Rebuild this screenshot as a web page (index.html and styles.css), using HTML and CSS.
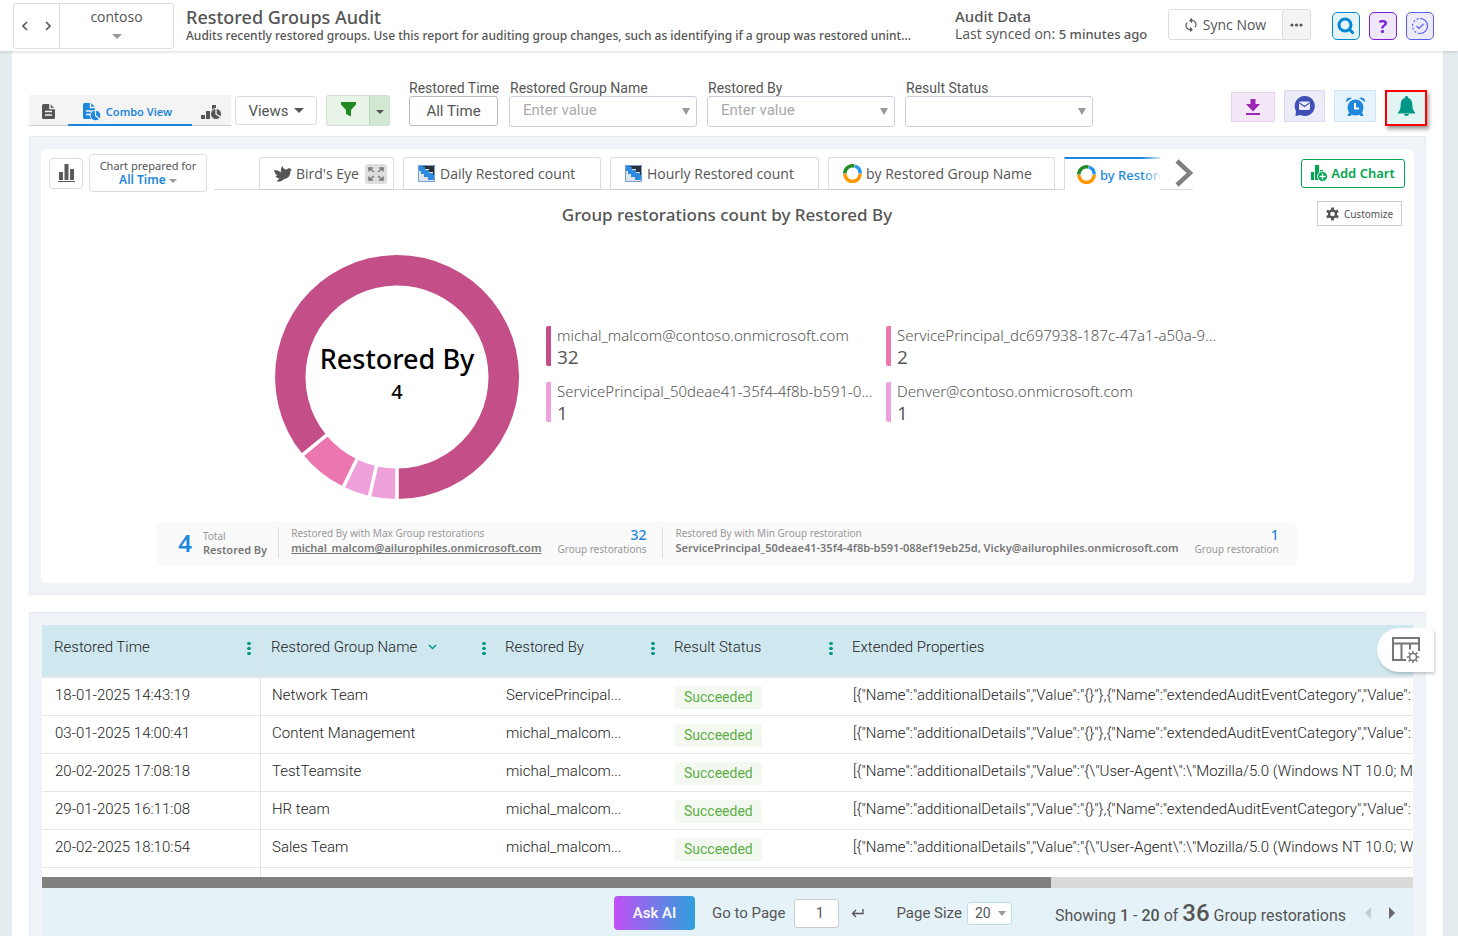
FILE: index.html
```html
<!DOCTYPE html>
<html lang="en">
<head>
  <meta charset="UTF-8">
  <meta name="viewport" content="width=device-width, initial-scale=1.0">
  <title>Restored Groups Audit</title>
  <link rel="stylesheet" href="styles.css">
</head>
<body>

  <header class="topbar">
    <div class="tenant">
      <div class="tenant-nav">
        <button aria-label="Back"><svg width="6" height="10" viewBox="0 0 6 10"><path d="M5 1L1 5l4 4" fill="none" stroke="#555" stroke-width="1.6"/></svg></button>
        <button aria-label="Forward"><svg width="6" height="10" viewBox="0 0 6 10"><path d="M1 1l4 4-4 4" fill="none" stroke="#555" stroke-width="1.6"/></svg></button>
      </div>
      <button class="tenant-name">contoso<span class="caret grey"></span></button>
    </div>
    <div class="page-title">
      <h1>Restored Groups Audit</h1>
      <p>Audits recently restored groups. Use this report for auditing group changes, such as identifying if a group was restored unint...</p>
    </div>
    <div class="sync-info">
      <div class="sync-title">Audit Data</div>
      <div>Last synced on: <b>5 minutes ago</b></div>
    </div>
    <div class="sync">
      <button class="sync-now">
        <svg width="12" height="14" viewBox="0 0 12 14" fill="none" stroke="#555" stroke-width="1.2"><path d="M5 2.5H6.500a4 4 0 0 1 3.300 6.800M7 11.500H5.500A4 4 0 0 1 2.200 4.700"/><path d="M7 .5L5 2.500l2 2M5 9.500l2 2-2 2"/></svg>
        Sync Now
      </button>
      <button class="sync-more" aria-label="More">
        <svg width="13" height="4" viewBox="0 0 13 4" fill="#555"><circle cx="2" cy="2" r="1.6"/><circle cx="6.500" cy="2" r="1.6"/><circle cx="11" cy="2" r="1.6"/></svg>
      </button>
    </div>
    <div class="top-icons">
      <button class="ic-search" aria-label="Search"><svg width="18" height="18" viewBox="0 0 18 18" fill="none" stroke="#0288d1" stroke-width="3"><circle cx="8" cy="8" r="6"/><path d="M12 12l4.500 4.500"/></svg></button>
      <button class="ic-help" aria-label="Help">?</button>
      <button class="ic-check" aria-label="Tasks"><svg width="18" height="18" viewBox="0 0 18 18" fill="none" stroke="#5b5fef" stroke-width="1.2"><path d="M9 1.500a7.500 7.500 0 0 1 0 15"/><path d="M9 16.500a7.500 7.500 0 0 1 0-15" stroke-dasharray="2 2"/><path d="M5.500 9l2.500 2.500 4.500-4.500"/></svg></button>
    </div>
  </header>

  <main class="content">

    <div class="toolbar">
      <div class="view-tabs">
        <button aria-label="Report view"><svg width="13" height="15" viewBox="0 0 13 15"><path d="M2 0h6l5 4.500V13.500a1.500 1.500 0 0 1-1.500 1.500h-10A1.500 1.500 0 0 1 0 13.500v-12A1.500 1.500 0 0 1 1.500 0z" fill="#555"/><path d="M8 0v4.500h5M3 7.500h7M3 11h7" fill="none" stroke="#f4f4f4" stroke-width="1.500"/></svg></button>
        <button class="active">
          <svg width="18" height="18" viewBox="0 0 18 18"><path d="M1.500 0H8l4 4v12H1.500A1.500 1.500 0 0 1 0 14.500v-13A1.500 1.500 0 0 1 1.500 0z" fill="#1f87db"/><path d="M7.500 0v4.500H12M3 8h6M3 11.500h4" fill="none" stroke="#f4f4f4" stroke-width="1.400"/><circle cx="12.500" cy="12.500" r="5.300" fill="#1f87db" stroke="#f4f4f4"/><path d="M12.500 7v5.500l4 3.500" fill="none" stroke="#f4f4f4" stroke-width="1.200"/></svg>
          Combo View
        </button>
        <button aria-label="Chart view"><svg width="21" height="16" viewBox="0 0 21 16" fill="#555"><path d="M0 11h4v4H0zM5 7h4v8H5zM11 1h4v5h-4z"/><circle cx="15" cy="10" r="5.500" stroke="#f4f4f4"/><path d="M15 4v6l4.500 3" fill="none" stroke="#f4f4f4" stroke-width="1.300"/></svg></button>
      </div>
      <button class="views">Views <span class="caret"></span></button>
      <div class="filter-btn">
        <button aria-label="Filter"><svg width="15" height="15" viewBox="0 0 15 15"><path d="M0 0h15v2.500L10 8v6.500L5 12V8L0 2.500z" fill="#1f8a1f"/></svg></button>
        <button class="filter-more" aria-label="Filter options"><span class="caret"></span></button>
      </div>
      <div class="filters">
        <div class="field time">
          <label for="restoredTime">Restored Time</label>
          <button id="restoredTime">All Time</button>
        </div>
        <div class="field">
          <label for="groupName">Restored Group Name</label>
          <div class="select-box"><select id="groupName"><option>Enter value</option></select></div>
        </div>
        <div class="field">
          <label for="restoredBy">Restored By</label>
          <div class="select-box"><select id="restoredBy"><option>Enter value</option></select></div>
        </div>
        <div class="field">
          <label for="resultStatus">Result Status</label>
          <div class="select-box"><select id="resultStatus"><option></option></select></div>
        </div>
      </div>
      <div class="actions">
        <button class="act-download" aria-label="Download"><svg width="14" height="16" viewBox="0 0 14 16" fill="#9c27b0"><path d="M4.500 0h5v5H14l-7 7.500L0 5h4.500zM0 14h14v2H0z"/></svg></button>
        <button class="act-mail" aria-label="Mail"><svg width="21" height="20" viewBox="0 0 21 20"><path d="M10.500 0a10 10 0 1 1-4 19L1.500 20l.5-5A10 10 0 0 1 10.500 0z" fill="#3f51b5"/><rect x="5" y="5.500" width="11" height="8.500" rx="1.500" fill="#ebecf8"/><path d="M5.500 7l5 3.500 5-3.500" fill="none" stroke="#3f51b5" stroke-width="1.200"/></svg></button>
        <button class="act-clock" aria-label="Schedule"><svg width="19" height="19" viewBox="0 0 19 19"><g fill="#1f87db"><circle cx="9.500" cy="10.500" r="8"/><path d="M0 5a4 4 0 0 1 6-4zM19 5a4 4 0 0 0-6-4zM3 15l3 2.500L4.500 19H1.500zM16 15l-3 2.500 1.500 1.500h3z"/></g><path d="M9 6v5.500h4" fill="none" stroke="#fff" stroke-width="2"/></svg></button>
        <button class="act-bell" aria-label="Alert"><svg width="17" height="20" viewBox="0 0 17 20" fill="#009688"><path d="M8.500 0c1 0 1.500.7 1.500 1.700 3 .9 4.300 3.500 4.300 6.300 0 4 .7 6.500 2.700 8.500v1H0v-1C2 14.500 2.700 12 2.700 8 2.700 5.200 4 2.600 7 1.700 7 .7 7.500 0 8.500 0zM6 18h5a2.500 2 0 0 1-5 0z"/></svg></button>
      </div>
    </div>

    <section class="panel chart-panel">
      <div class="card">
        <div class="chart-head">
          <button class="chart-type" aria-label="Chart type"><svg width="17" height="18" viewBox="0 0 17 18" fill="#5a5a5a"><path d="M1 8h4v8H1zM6.500 0h4v16h-4zM12 5h4v11h-4zM0 17h17v1H0z"/></svg></button>
          <button class="prepared">Chart prepared for<span class="prepared-val">All Time <span class="caret grey"></span></span></button>
          <div class="tab-strip">
            <div class="tabs">
              <div class="tab birds-eye">
                <svg width="18" height="16" viewBox="0 0 18 16" fill="#555"><path d="M0 4c3 0 5 .8 7 2.500C6.500 4 7 1.500 8.500 0c.5 2 2 3.500 4 3.500L14 2.500c1.500-.7 2.500 0 3 .7l1 .8-1.500.8c0 5.200-2.500 7.700-6.500 8.400C7.500 15.500 5 16 2.500 15.200l3-2.700C3.500 12.300 2 11.500 1.500 10l2-.3C1.500 8.500.5 6.500 0 4z"/></svg>
                Bird's Eye
                <button class="expand" aria-label="Expand"><svg width="16" height="14" viewBox="0 0 16 14" fill="none" stroke="#777" stroke-width="1.500"><path d="M1 4.500V1h4M1 1l5 4M11 1h4v3.500M15 1l-5 4M1 9.500V13h4M1 13l5-4M11 13h4V9.500M15 13l-5-4"/></svg></button>
              </div>
              <button class="tab daily"><svg width="17" height="17" viewBox="0 0 17 17"><path d="M0 0h17v17H0z" fill="#dce3ea"/><path d="M0 0h5v2h2v3h4v3h4v2h2v5h-7v-3H6V9H3V6H0z" fill="#2b8be0"/><path d="M5 0h12v10h-2V7h-4V4H7V2H5z" fill="#2b2f36"/><path d="M.5.5h16v16H.5z" fill="none" stroke="#7b9fcf"/></svg>Daily Restored count</button>
              <button class="tab hourly"><svg width="17" height="17" viewBox="0 0 17 17"><path d="M0 0h17v17H0z" fill="#dce3ea"/><path d="M0 0h5v2h2v3h4v3h4v2h2v5h-7v-3H6V9H3V6H0z" fill="#2b8be0"/><path d="M5 0h12v10h-2V7h-4V4H7V2H5z" fill="#2b2f36"/><path d="M.5.5h16v16H.5z" fill="none" stroke="#7b9fcf"/></svg>Hourly Restored count</button>
              <button class="tab by-name"><svg width="19" height="19" viewBox="0 0 19 19" fill="none" stroke-width="3.500"><path d="M1.800 9.500A7.700 7.700 0 0 1 11.500 2.100" stroke="#228b22"/><path d="M12 2.200a7.700 7.700 0 0 1 5.200 7.300" stroke="#2196f3"/><path d="M17.200 9.800a7.700 7.700 0 0 1-15.400 0" stroke="#ff9800"/></svg>by Restored Group Name</button>
              <button class="tab current"><svg width="19" height="19" viewBox="0 0 19 19" fill="none" stroke-width="3.500"><path d="M1.800 9.500A7.700 7.700 0 0 1 11.500 2.100" stroke="#228b22"/><path d="M12 2.200a7.700 7.700 0 0 1 5.200 7.300" stroke="#2196f3"/><path d="M17.200 9.800a7.700 7.700 0 0 1-15.400 0" stroke="#ff9800"/></svg>by Restored By</button>
            </div>
            <button class="next" aria-label="Next charts"><svg width="18" height="28" viewBox="0 0 18 28"><path d="M2 2l13 12L2 26" fill="none" stroke="#808080" stroke-width="4.500"/></svg></button>
          </div>
          <button class="add-chart">
            <svg width="17" height="18" viewBox="0 0 17 18" fill="#00a651"><path d="M0 8h3v8H0zM4 1h4v15H4zM9 6h3v8H9z"/><circle cx="11.500" cy="12.500" r="5" stroke="#fff"/><path d="M11.500 9.500v6M8.500 12.500h6" stroke="#fff" stroke-width="1.300"/></svg>
            Add Chart
          </button>
        </div>

        <div class="chart-title">
          <h2>Group restorations count by Restored By</h2>
          <button class="customize">
            <svg width="13" height="14" viewBox="-7 -7 14 14"><g fill="#555"><path d="M-1.500-7h3v14h-3z"/><path d="M-1.500-7h3v14h-3z" transform="rotate(60)"/><path d="M-1.500-7h3v14h-3z" transform="rotate(120)"/><circle r="5"/></g><circle r="2.500" fill="#fff"/></svg>
            Customize
          </button>
        </div>

        <div class="chart-body">
          <svg class="donut" width="246" height="246" viewBox="-123 -123 246 246">
            <path fill="#c44f88" d="M0 122A122 122 0 1 0-94.100 77.600L-70.600 58.200A91.500 91.500 0 1 1 0 91.500z"/>
            <path fill="#ec77b0" d="M-94.100 77.600A122 122 0 0 0-53.500 109.700L-40.100 82.200A91.500 91.500 0 0 1-70.600 58.200z"/>
            <path fill="#eda0da" d="M-53.500 109.700A122 122 0 0 0-27.400 118.900L-20.600 89.200A91.500 91.500 0 0 1-40.100 82.200z"/>
            <path fill="#eda0da" d="M-27.400 118.900A122 122 0 0 0 0 122V91.500A91.500 91.500 0 0 1-20.600 89.200z"/>
            <path stroke="#fff" stroke-width="3.500" d="M0 90v34M-20.300 88L-27.900 121M-39.500 81L-54.400 111.500M-69.500 57.300L-96 79.200" fill="none"/>
            <text class="donut-name" y="-8">Restored By</text>
            <text class="donut-num" y="22">4</text>
          </svg>
          <ul class="legend">
            <li class="c1"><span>michal_malcom@contoso.onmicrosoft.com</span><strong>32</strong></li>
            <li class="c2"><span>ServicePrincipal_dc697938-187c-47a1-a50a-9...</span><strong>2</strong></li>
            <li class="c3"><span>ServicePrincipal_50deae41-35f4-4f8b-b591-0...</span><strong>1</strong></li>
            <li class="c3"><span>Denver@contoso.onmicrosoft.com</span><strong>1</strong></li>
          </ul>
        </div>

        <div class="stats">
          <div class="stat total">
            <span class="big">4</span>
            <div>Total<b>Restored By</b></div>
          </div>
          <div class="stat">
            <div>Restored By with Max Group restorations<a href="#">michal_malcom@ailurophiles.onmicrosoft.com</a></div>
            <div class="count"><span>32</span>Group restorations</div>
          </div>
          <div class="stat">
            <div>Restored By with Min Group restoration<b>ServicePrincipal_50deae41-35f4-4f8b-b591-088ef19eb25d, Vicky@ailurophiles.onmicrosoft.com</b></div>
            <div class="count"><span>1</span>Group restoration</div>
          </div>
        </div>
      </div>
    </section>

    <section class="panel grid-panel">
      <div class="grid-scroll">
        <table>
          <thead>
            <tr>
              <th class="w-time">Restored Time<i class="dots"></i></th>
              <th class="w-group">Restored Group Name <svg class="sort" width="9" height="6" viewBox="0 0 9 6"><path d="M1 1l3.500 3.500L8 1" fill="none" stroke="#009688" stroke-width="1.500"/></svg><i class="dots"></i></th>
              <th class="w-by">Restored By<i class="dots"></i></th>
              <th class="w-status">Result Status<i class="dots"></i></th>
              <th>Extended Properties</th>
            </tr>
          </thead>
          <tbody>
            <tr>
              <td>18-01-2025 14:43:19</td><td>Network Team</td><td>ServicePrincipal...</td><td class="status"><span class="badge">Succeeded</span></td>
              <td>[{"Name":"additionalDetails","Value":"{}"},{"Name":"extendedAuditEventCategory","Value":</td>
            </tr>
            <tr>
              <td>03-01-2025 14:00:41</td><td>Content Management</td><td>michal_malcom...</td><td class="status"><span class="badge">Succeeded</span></td>
              <td>[{"Name":"additionalDetails","Value":"{}"},{"Name":"extendedAuditEventCategory","Value":</td>
            </tr>
            <tr>
              <td>20-02-2025 17:08:18</td><td>TestTeamsite</td><td>michal_malcom...</td><td class="status"><span class="badge">Succeeded</span></td>
              <td>[{"Name":"additionalDetails","Value":"{\"User-Agent\":\"Mozilla/5.0 (Windows NT 10.0; M</td>
            </tr>
            <tr>
              <td>29-01-2025 16:11:08</td><td>HR team</td><td>michal_malcom...</td><td class="status"><span class="badge">Succeeded</span></td>
              <td>[{"Name":"additionalDetails","Value":"{}"},{"Name":"extendedAuditEventCategory","Value":</td>
            </tr>
            <tr>
              <td>20-02-2025 18:10:54</td><td>Sales Team</td><td>michal_malcom...</td><td class="status"><span class="badge">Succeeded</span></td>
              <td>[{"Name":"additionalDetails","Value":"{\"User-Agent\":\"Mozilla/5.0 (Windows NT 10.0; W</td>
            </tr>
            <tr>
              <td></td><td></td><td></td><td></td><td></td>
            </tr>
          </tbody>
        </table>
      </div>
      <div class="hscroll"><div class="hscroll-thumb"></div></div>
      <div class="pager">
        <button class="ask-ai">Ask AI</button>
        <label for="pageNo">Go to Page</label>
        <input type="text" id="pageNo" value="1">
        <button class="enter" aria-label="Go"><svg width="13" height="10" viewBox="0 0 13 10"><path d="M12 1v4.500H2M5 2L1.500 5.500 5 9" fill="none" stroke="#555" stroke-width="1.300"/></svg></button>
        <label for="pageSize">Page Size</label>
        <div class="select-box size"><select id="pageSize"><option>20</option><option>50</option></select></div>
        <div class="showing">Showing <b>1</b> - <b>20</b> of <strong>36</strong> Group restorations</div>
        <button class="prev-page" aria-label="Previous page" disabled></button>
        <button class="next-page" aria-label="Next page"></button>
      </div>
      <button class="col-settings" aria-label="Column settings">
        <svg width="28" height="26" viewBox="0 0 28 26" fill="none" stroke="#777" stroke-width="2"><path d="M14 23H1V1h26v13M1 6.500h26M9.500 6.500V23M18 6.500v6"/><circle cx="21" cy="20" r="3.500" stroke-width="1.500"/><path d="M21 13.800v2.500M21 23.700v2.300M14.800 20h2.500M24.700 20h2.500M16.600 15.600l1.800 1.800M23.600 22.600l1.800 1.800M16.600 24.400l1.800-1.800M23.600 17.400l1.800-1.800" stroke-width="1.500"/></svg>
      </button>
    </section>

  </main>

</body>
</html>
```
FILE: styles.css
```css
* {
  box-sizing: border-box;
}
body {
  margin: 0;
  height: 100vh;
  min-width: 1300px;
  display: flex;
  flex-direction: column;
  overflow: hidden;
  background: #e4ecef;
  color: #555;
  font-family: "Open Sans", "Noto Sans", sans-serif;
  font-size: 14px;
}
button, select, input {
  font: inherit;
  color: inherit;
  background: #fff;
  border: 1px solid #ddd;
  border-radius: 3px;
  padding: 0;
  margin: 0;
}
button {
  display: flex;
  align-items: center;
  justify-content: center;
  white-space: nowrap;
  cursor: pointer;
}
svg {
  flex: none;
  display: block;
}
.caret {
  display: inline-block;
  border: 5px solid transparent;
  border-top-color: #555;
  border-bottom: 0;
}
.caret.grey {
  border-top-color: #999;
}

/* top bar */
.topbar {
  display: flex;
  align-items: flex-start;
  height: 51px;
  padding: 3px 24px 0 13px;
  background: #fff;
  box-shadow: 0 1px 3px rgba(0,0,0,0.15);
  z-index: 2;
}
.tenant {
  display: flex;
  width: 161px;
  height: 46px;
  border: 1px solid #ddd;
  border-radius: 3px;
}
.tenant-nav {
  display: flex;
  align-items: center;
  justify-content: space-around;
  width: 46px;
  border-right: 1px solid #ddd;
}
.tenant-nav button {
  border: 0;
}
.tenant-name {
  flex: 1;
  flex-direction: column;
  gap: 8px;
  padding-bottom: 5px;
  border: 0;
  line-height: 18px;
}
.page-title {
  flex: 1;
  min-width: 0;
  margin: 3px 18px 0 12px;
}
.page-title h1 {
  margin: 0;
  font-family: "Noto Sans", sans-serif;
  font-size: 18px;
  line-height: 22px;
  font-weight: 500;
}
.page-title p {
  margin: 0;
  font-family: "Noto Sans", sans-serif;
  font-size: 12px;
  line-height: 16px;
  font-weight: 500;
  overflow: hidden;
  text-overflow: ellipsis;
  white-space: nowrap;
}
.sync-info {
  width: 213px;
  margin-top: 4px;
  line-height: 18px;
  white-space: nowrap;
}
.sync-info b,
.sync-title {
  font-family: "Noto Sans", sans-serif;
  font-weight: 500;
}
.sync-title {
  font-size: 15px;
}
.sync-info b {
  font-size: 13px;
}
.sync {
  display: flex;
  height: 31px;
  margin: 6px 21px 0 0;
  border: 1px solid #ddd;
  border-radius: 3px;
}
.sync button {
  border: 0;
}
.sync-now {
  width: 113px;
  gap: 6px;
}
.sync .sync-more {
  width: 28px;
  background: #f4f4f4;
  border-left: 1px solid #ddd;
}
.top-icons {
  display: flex;
  gap: 9px;
  margin-top: 9px;
}
.top-icons button {
  width: 28px;
  height: 28px;
  border-radius: 5px;
}
.top-icons .ic-search {
  background: #e5f3fa;
  border-color: #0288d1;
}
.top-icons .ic-help {
  background: #f0e8fa;
  border-color: #7b1fd8;
  color: #7b1fd8;
  font-size: 18px;
  font-weight: 700;
}
.top-icons .ic-check {
  background: #ebebfc;
  border-color: #5b5fef;
}

/* page body */
.content {
  flex: 1;
  min-height: 0;
  display: flex;
  flex-direction: column;
  margin: 0 15px 0 12px;
  padding: 28px 17px 0;
  background: #fff;
}
.toolbar {
  display: flex;
  align-items: flex-end;
  height: 48px;
  font-family: Roboto, sans-serif;
}
.view-tabs {
  display: flex;
  width: 202px;
  height: 31px;
  margin: 0 4px 1px 0;
  background: #f4f4f4;
  border-bottom: 1px solid #ccc;
}
.view-tabs button {
  width: 39px;
  padding-top: 3px;
  background: none;
  border: 0;
  border-radius: 0;
}
.view-tabs .active {
  width: 124px;
  height: 31px;
  gap: 5px;
  padding: 4px 5px 0 0;
  border-bottom: 2px solid #1f87db;
  color: #1f87db;
  font-family: "Noto Sans", sans-serif;
  font-size: 11px;
  font-weight: 600;
}
.views {
  width: 82px;
  height: 29px;
  gap: 5px;
  margin: 0 9px 2px 0;
  font-size: 15px;
}
.filter-btn {
  display: flex;
  width: 64px;
  height: 31px;
  margin: 0 19px 1px 0;
  border: 1px solid #d5dfd5;
  border-radius: 2px;
}
.filter-btn button {
  width: 42px;
  padding-bottom: 3px;
  background: #e8f4e8;
  border: 0;
  border-radius: 0;
}
.filter-btn .filter-more {
  flex: 1;
  padding: 3px 0 0;
  background: #d3e8d3;
  border-left: 1px solid #bdd3bd;
}
.filter-more .caret {
  border-width: 4px 4px 0;
}
.filters {
  display: flex;
  gap: 10px;
}
.field {
  width: 188px;
}
.field label {
  display: block;
  padding: 1px 0 0 1px;
  line-height: 16px;
  white-space: nowrap;
}
.field.time {
  width: 90px;
}
.field.time label {
  padding-left: 0;
}
.field.time button {
  width: 89px;
  height: 30px;
  margin-bottom: 1px;
  border-color: #bbb;
  font-size: 15px;
}
.select-box {
  position: relative;
}
.select-box select {
  display: block;
  appearance: none;
  width: 100%;
  height: 31px;
  padding: 0 13px 3px;
  border-color: #c9cfdd;
  color: #aaa;
  font-size: 15px;
}
.select-box::after {
  content: "";
  position: absolute;
  right: 7px;
  top: 12px;
  border: 4px solid transparent;
  border-top: 7px solid #999;
  border-bottom: 0;
}
.actions {
  display: flex;
  align-items: flex-end;
  gap: 9px;
  margin: 0 -1px 1px auto;
}
.actions button {
  width: 42px;
  height: 32px;
  margin-bottom: 4px;
  border-radius: 0;
}
.actions .act-download {
  width: 44px;
  height: 30px;
  background: #f4e7f8;
  border-color: #ebcff2;
}
.actions .act-mail {
  width: 41px;
  background: #ebecf8;
  border-color: #d8daf2;
}
.actions .act-clock {
  background: #e7f3fc;
  border-color: #cde5f6;
}
.actions .act-bell {
  height: 36px;
  margin-bottom: 0;
  padding-bottom: 4px;
  background: #e3f5f3;
  border: 2px solid #f00;
  box-shadow: 2px 3px 4px rgba(0,0,0,0.4);
}

/* chart panel */
.panel {
  background: #f0f4f8;
  border: 1px solid #e5ebf0;
}
.chart-panel {
  margin-top: 9px;
  padding: 12px 11px 11px;
}
.card {
  padding: 5px 9px 17px 8px;
  background: #fff;
  border-radius: 6px;
}
.chart-head {
  display: flex;
  align-items: center;
  height: 38px;
}
.chart-type {
  width: 34px;
  height: 31px;
  border-radius: 4px;
}
.prepared {
  flex-direction: column;
  width: 118px;
  height: 38px;
  margin: 0 7px 0 6px;
  border-radius: 4px;
  font-family: "Noto Sans", sans-serif;
  font-size: 11px;
  line-height: 14px;
}
.prepared-val {
  color: #1f87db;
  font-size: 12px;
  font-weight: 600;
}
.prepared .caret {
  border-width: 4px 4px 0;
  vertical-align: 1px;
}
.tab-strip {
  flex: 1;
  min-width: 0;
  display: flex;
  align-self: flex-start;
  height: 36px;
  padding-top: 3px;
  margin-right: 108px;
  border-bottom: 1px solid #ddd;
}
.tabs {
  flex: 1;
  position: relative;
  display: flex;
  gap: 9px;
  height: 33px;
  padding-left: 45px;
  overflow: hidden;
}
/* fades out the tab that runs under the arrow */
.tabs::after {
  content: "";
  position: absolute;
  right: 0;
  top: 0;
  width: 18px;
  height: 33px;
  background: linear-gradient(to right, rgba(255,255,255,0), rgba(255,255,255,0.8));
}
.tab {
  flex: none;
  display: flex;
  align-items: center;
  justify-content: flex-start;
  gap: 5px;
  padding-left: 14px;
  border: 1px solid #ddd;
  border-bottom-color: #ccc;
  border-radius: 3px 3px 0 0;
}
.birds-eye {
  width: 135px;
  gap: 4px;
}
.expand {
  width: 22px;
  height: 20px;
  margin-left: 2px;
  background: #ddd;
  border: 0;
}
.daily {
  width: 198px;
}
.hourly {
  width: 209px;
}
.by-name {
  width: 227px;
}
.by-name,
.current {
  gap: 4px;
}
.tab.current {
  width: 160px;
  padding-left: 12px;
  border-top: 2px solid #1f87db;
  border-bottom: 0;
  border-radius: 0;
  color: #1f87db;
  font-family: "Noto Sans", sans-serif;
  font-size: 13px;
  font-weight: 500;
}
.next {
  width: 33px;
  justify-content: flex-end;
  border: 0;
}
.add-chart {
  width: 104px;
  height: 29px;
  gap: 3px;
  border-color: #00a651;
  color: #00a651;
  font-family: "Noto Sans", sans-serif;
  font-size: 13px;
  font-weight: 600;
}
.chart-title {
  display: grid;
  grid-template-columns: 1fr auto 1fr;
  align-items: center;
  height: 25px;
  margin: 9px 0 0;
}
.chart-title h2 {
  grid-column: 2;
  margin: 0;
  padding-top: 2px;
  font-family: "Noto Sans", sans-serif;
  font-size: 17px;
  line-height: 23px;
  font-weight: 500;
}
.customize {
  justify-self: end;
  width: 85px;
  height: 25px;
  margin-right: 3px;
  gap: 5px;
  border-radius: 0;
  border-color: #ccc;
  font-family: "Noto Sans", sans-serif;
  font-size: 10px;
}
.chart-body {
  display: flex;
  align-items: center;
  justify-content: center;
  gap: 26px;
  margin: 28px 0 0 34px;
}
.donut text {
  fill: #000;
  text-anchor: middle;
  font-family: "Noto Sans", sans-serif;
  font-weight: 500;
}
.donut-name {
  font-size: 27px;
}
.donut-num {
  font-size: 20px;
}
.legend {
  display: grid;
  grid-template-columns: 326px 328px;
  gap: 16px 14px;
  margin: 0;
  padding: 0 0 6px;
  list-style: none;
}
.legend li {
  height: 40px;
  padding-left: 6px;
  border-left: 5px solid #c44f88;
  border-radius: 2px;
  color: #555;
  white-space: nowrap;
}
.legend .c2 {
  border-color: #ec77b0;
}
.legend .c3 {
  border-color: #eda0da;
}
.legend span {
  display: block;
  font-family: "Noto Sans", sans-serif;
  font-size: 15px;
  line-height: 18px;
  font-weight: 300;
}
.legend strong {
  display: block;
  font-size: 19px;
  line-height: 26px;
  font-weight: 400;
}
.stats {
  display: flex;
  align-items: center;
  width: max-content;
  height: 45px;
  margin: 21px auto 0;
  padding: 0 19px 2px 22px;
  background: #fafafa;
  border-radius: 8px;
  color: #999;
  font-family: "Noto Sans", sans-serif;
  font-size: 10px;
  line-height: 13px;
}
.stat {
  display: flex;
  gap: 16px;
  height: 31px;
  padding: 0 16px 0 12px;
  border-left: 1px solid #ddd;
}
.stat:last-child {
  padding-right: 0;
}
.stat b,
.stat a {
  display: block;
  color: #777;
  font-size: 11px;
  font-weight: 600;
  line-height: 16px;
}
.stat.total {
  align-items: center;
  gap: 11px;
  padding: 0 11px 0 0;
  border: 0;
}
.stat .big {
  color: #1f87db;
  font-size: 24px;
  font-weight: 600;
}
.stat.total b {
  line-height: 13px;
}
.count {
  text-align: right;
}
.count span {
  display: block;
  color: #1f87db;
  font-size: 14px;
  font-weight: 500;
  line-height: 16px;
}

/* grid */
.grid-panel {
  flex: 1;
  min-height: 0;
  position: relative;
  display: flex;
  flex-direction: column;
  margin-top: 17px;
  padding: 12px 12px 0;
  border-bottom: 0;
  font-family: Roboto, sans-serif;
}
.grid-scroll {
  flex: 1;
  min-height: 0;
  overflow: hidden;
  background: #fff;
}
table {
  width: 100%;
  table-layout: fixed;
  border-collapse: separate;
  border-spacing: 0;
  color: #222;
  font-size: 15px;
  font-weight: 300;
}
th {
  position: relative;
  height: 53px;
  padding: 0 10px 7px;
  background: #cfe8ef;
  border-bottom: 2px solid #e4e8ea;
  text-align: left;
  font-weight: 300;
  white-space: nowrap;
}
th:first-child {
  padding-left: 12px;
}
.w-time {
  width: 219px;
}
.w-group {
  width: 234px;
}
.w-by {
  width: 169px;
}
.w-status {
  width: 178px;
}
.sort {
  display: inline-block;
  margin-left: 7px;
  vertical-align: 2px;
}
.dots {
  position: absolute;
  right: 9px;
  top: 16px;
  width: 4px;
  height: 15px;
  background: radial-gradient(circle, #009688 1.5px, transparent 2px) 0 0 / 4px 5px;
}
td {
  height: 38px;
  padding: 0 0 3px 11px;
  border-bottom: 1px solid #e6e6e6;
  overflow: hidden;
  white-space: nowrap;
}
td:first-child {
  padding-left: 13px;
}
td.status {
  padding-top: 1px;
  padding-bottom: 0;
}
th:first-child,
td:first-child {
  border-right: 1px solid #e0e6e8;
}
.badge {
  display: inline-block;
  height: 23px;
  padding: 0 9px;
  background: #f3f9f0;
  border-radius: 2px;
  color: #5cae45;
  font-size: 14px;
  font-weight: 400;
  line-height: 23px;
  vertical-align: middle;
}
.hscroll {
  height: 11px;
  background: #dadada;
}
.hscroll-thumb {
  width: 73.6%;
  height: 11px;
  background: #808080;
}
.pager {
  display: flex;
  align-items: center;
  justify-content: flex-end;
  height: 48px;
  padding: 2px 18px 0 0;
  background: #e5f3f8;
}
.pager label {
  margin-right: 9px;
  font-size: 15px;
}
.ask-ai {
  width: 81px;
  height: 34px;
  margin-right: 17px;
  background: linear-gradient(to right, #c050f5, #2fa0dc);
  border: 0;
  border-radius: 4px;
  color: #fff;
  font-size: 15px;
  font-weight: 500;
}
.pager input {
  width: 45px;
  height: 29px;
  border-color: #ccc;
  padding-left: 6px;
  text-align: center;
}
.enter {
  margin: 0 32px 0 12px;
  background: none;
  border: 0;
}
.pager label[for="pageSize"] {
  margin-right: 5px;
}
.select-box.size {
  width: 45px;
}
.size select {
  height: 23px;
  padding: 0 0 0 7px;
  border-color: #bcdce6;
  color: #555;
  font-size: 14px;
}
.size.select-box::after {
  top: 9px;
  right: 6px;
  border-top-width: 5px;
}
.showing {
  margin: 0 19px 0 43px;
  font-size: 16px;
  white-space: nowrap;
}
.showing b {
  font-weight: 500;
}
.showing strong {
  font-size: 24px;
  font-weight: 500;
}
.prev-page,
.next-page {
  background: none;
  border: 6px solid transparent;
  border-radius: 0;
}
.prev-page {
  margin-right: 18px;
  border-left: 0;
  border-right-color: #c3ccd0;
}
.next-page {
  border-right: 0;
  border-left-color: #666;
}
.col-settings {
  position: absolute;
  right: -9px;
  top: 15px;
  width: 57px;
  height: 44px;
  border: 0;
  border-radius: 22px 4px 0 22px;
  box-shadow: 1px 2px 3px rgba(0,0,0,0.2);
}
```
